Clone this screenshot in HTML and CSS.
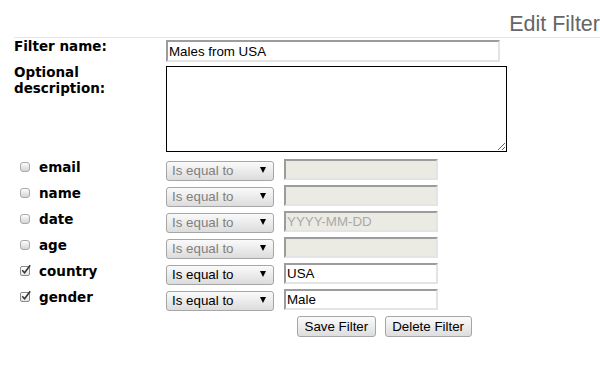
FILE: index.html
```html
<!DOCTYPE html>
<html lang="en">

<head>
    <meta http-equiv="Content-Type" content="text/html; charset=utf-8"/>
    <title>Edit Filter</title>
    <link rel="stylesheet" href="styles.css">
</head>

<body>

<div class="page">

    <div class="header">
        <h1 class="title">Edit Filter</h1>
    </div>

    <form class="filter-form">
        <div class="field">
            <label class="field-label" for="filter_name">Filter name:</label>
            <input id="filter_name" class="text-input name-input" type="text" value="Males from USA">
        </div>
        <div class="field">
            <label class="field-label" for="description">Optional description:</label>
            <textarea id="description" class="description"></textarea>
        </div>

        <div class="criteria">
            <div class="criterion">
                <label class="criterion-label"><span class="check"></span>email</label>
                <span class="select-wrap"><select disabled><option>Is equal to</option></select></span>
                <input class="text-input value-input" type="text" disabled>
            </div>
            <div class="criterion">
                <label class="criterion-label"><span class="check"></span>name</label>
                <span class="select-wrap"><select disabled><option>Is equal to</option></select></span>
                <input class="text-input value-input" type="text" disabled>
            </div>
            <div class="criterion">
                <label class="criterion-label"><span class="check"></span>date</label>
                <span class="select-wrap"><select disabled><option>Is equal to</option></select></span>
                <input class="text-input value-input" type="text" placeholder="YYYY-MM-DD" disabled>
            </div>
            <div class="criterion">
                <label class="criterion-label"><span class="check"></span>age</label>
                <span class="select-wrap"><select disabled><option>Is equal to</option></select></span>
                <input class="text-input value-input" type="text" disabled>
            </div>
            <div class="criterion">
                <label class="criterion-label">
                    <span class="check checked"><svg class="tick" width="12" height="12" viewBox="0 0 12 12"><path d="M2.2 6.2 L4.6 8.8 L10.2 1.2" fill="none" stroke="#333" stroke-width="1.5"/></svg></span>country
                </label>
                <span class="select-wrap"><select><option>Is equal to</option></select></span>
                <input class="text-input value-input" type="text" value="USA">
            </div>
            <div class="criterion">
                <label class="criterion-label">
                    <span class="check checked"><svg class="tick" width="12" height="12" viewBox="0 0 12 12"><path d="M2.2 6.2 L4.6 8.8 L10.2 1.2" fill="none" stroke="#333" stroke-width="1.5"/></svg></span>gender
                </label>
                <span class="select-wrap"><select><option>Is equal to</option></select></span>
                <input class="text-input value-input" type="text" value="Male">
            </div>
        </div>

        <div class="actions">
            <button type="button">Save Filter</button>
            <button type="button">Delete Filter</button>
        </div>
    </form>

</div>

</body>

</html>
```

FILE: styles.css
```css
body {
    margin: 0;
    font-family: "DejaVu Sans", Verdana, sans-serif;
    color: #000;
    background: #fff;
}

.page {
    padding-left: 14px;
}

.header {
    display: flex;
    justify-content: flex-end;
    margin-top: 11px;
    border-bottom: 1px solid #e1e7ef;
}

.title {
    margin: 0;
    font: normal 21.5px/26px "Liberation Sans", Arial, sans-serif;
    color: #666;
}

.field {
    display: flex;
    align-items: flex-start;
}

.field + .field {
    margin-top: 2px;
}

.field-label,
.criterion-label {
    flex: none;
    width: 152px;
    font-weight: bold;
    font-size: 13.5px;
    line-height: 16px;
}

.text-input {
    box-sizing: border-box;
    padding: 1px 1px;
    border-width: 2px;
    border-style: solid;
    border-color: #9c9c9c #e4e4e4 #e4e4e4 #9c9c9c;
    font: 13.33px "Liberation Sans", Arial, sans-serif;
    color: #000;
    background: #fff;
}

.text-input:disabled {
    background: #ebebe4;
}

.text-input::placeholder {
    color: #a9a9a9;
}

.name-input {
    margin-top: 2px;
    width: 334px;
    height: 22px;
}

.description {
    box-sizing: border-box;
    margin: 2px 0 0;
    width: 341px;
    height: 86px;
    border: 1px solid #000;
    padding: 2px;
    font: 13.33px "Liberation Sans", Arial, sans-serif;
}

.criteria {
    margin-top: 7px;
}

.criterion {
    display: flex;
    align-items: flex-start;
}

.criterion + .criterion {
    margin-top: 5px;
}

.criterion-label {
    display: flex;
    align-items: center;
    gap: 9px;
    box-sizing: border-box;
    padding-left: 6px;
}

.check {
    flex: none;
    position: relative;
    box-sizing: border-box;
    width: 10px;
    height: 10px;
    border: 1px solid #a9a9a9;
    border-radius: 3px;
    background: linear-gradient(#fdfdfd, #d4d4d4);
}

.check.checked {
    border-color: #8a8a8a;
    border-radius: 2px;
    background: linear-gradient(#fff, #e6e6e6);
}

.tick {
    position: absolute;
    left: -1px;
    top: -3px;
}

.select-wrap {
    position: relative;
    flex: none;
    width: 108px;
    height: 20px;
    margin: 1px 10px 0 0;
}

.select-wrap::after {
    content: "";
    position: absolute;
    right: 8px;
    top: 7px;
    border-left: 3px solid transparent;
    border-right: 3px solid transparent;
    border-top: 6px solid #000;
    pointer-events: none;
}

select {
    appearance: none;
    box-sizing: border-box;
    width: 100%;
    height: 100%;
    margin: 0;
    padding: 0 0 0 5px;
    border: 1px solid #a6a6a6;
    border-radius: 3px;
    background: linear-gradient(#fafafa, #dcdcdc);
    font: 13.33px "Liberation Sans", Arial, sans-serif;
    color: #000;
}

select:disabled {
    color: #808080;
    opacity: 1;
}

.value-input {
    width: 154px;
    height: 21px;
}

.actions {
    display: flex;
    gap: 9px;
    margin-top: 6px;
    padding-left: 283px;
}

button {
    height: 21px;
    padding: 0 6.5px;
    border: 1px solid #a6a6a6;
    border-radius: 3px;
    background: linear-gradient(#fbfbfb, #dddddd);
    font: 13.33px "Liberation Sans", Arial, sans-serif;
    color: #000;
}
```
